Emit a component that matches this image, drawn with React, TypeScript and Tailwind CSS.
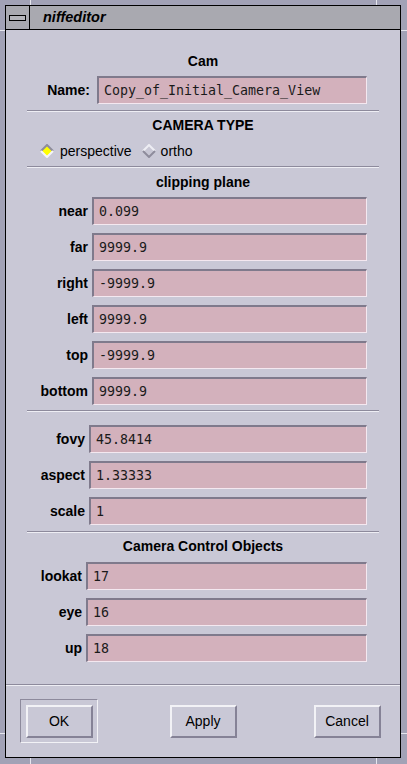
import React from 'react';

const sans = { fontFamily: '"Liberation Sans", Arial, sans-serif' };
const mono = { fontFamily: '"DejaVu Sans Mono", "Liberation Mono", monospace' };

function Field({ value, width }: { value: string; width: string }) {
  return (
    <div
      className={`h-[28px] ${width} bg-[#d3b1bc] border-t-2 border-l-2 border-b border-r border-t-[#7f7a8c] border-l-[#7f7a8c] border-b-[#f4e8f0] border-r-[#f4e8f0] flex items-center pl-[5px] text-[13.3px] text-[#1a1a1a]`}
      style={mono}
    >
      {value}
    </div>
  );
}

function Row({ label, value, width, gap = 'ml-[4px]' }: { label: string; value: string; width: string; gap?: string }) {
  return (
    <div className="flex items-center justify-end pr-[33px]">
      <span className="text-[14px] font-bold text-black leading-none" style={sans}>
        {label}
      </span>
      <div className={gap}>
        <Field value={value} width={width} />
      </div>
    </div>
  );
}

function Sep({ full = false }: { full?: boolean }) {
  return (
    <div className={full ? 'w-full' : 'mx-[21px]'}>
      <div className="h-px bg-[#8d8a9c]" />
      <div className="h-px bg-[#eeeef4]" />
    </div>
  );
}

function Heading({ children }: { children: React.ReactNode }) {
  return (
    <div className="h-[16px] flex items-center justify-center text-[14px] font-bold text-black" style={sans}>
      {children}
    </div>
  );
}

function Diamond({ on }: { on: boolean }) {
  return (
    <svg width="14" height="14" viewBox="0 0 14 14">
      <polygon points="7,1 13,7 7,13 1,7" fill={on ? '#ffff00' : '#c8c7d5'} />
      <polyline points="1,7 7,1 13,7" fill="none" stroke={on ? '#8e8c9c' : '#eeeef4'} strokeWidth="2" />
      <polyline points="13,7 7,13 1,7" fill="none" stroke={on ? '#f4f4f8' : '#8e8c9c'} strokeWidth="2" />
    </svg>
  );
}

function Button({ label, isDefault = false }: { label: string; isDefault?: boolean }) {
  return (
    <div
      className={`w-[78px] h-[44px] flex items-center justify-center ${
        isDefault ? 'border-t border-l border-b border-r border-t-[#8d8a9c] border-l-[#8d8a9c] border-b-[#f2f2f6] border-r-[#f2f2f6]' : ''
      }`}
    >
      <div
        className="w-[67px] h-[33px] bg-[#c9c8d6] border-t-2 border-l-2 border-b-2 border-r-2 border-t-[#f2f2f6] border-l-[#f2f2f6] border-b-[#858296] border-r-[#858296] flex items-center justify-center text-[14px] text-black"
        style={sans}
      >
        {label}
      </div>
    </div>
  );
}

export default function App() {
  return (
    <div className="relative w-[407px] h-[764px] bg-[#a2a2b6] pt-[5px] pl-[5px] pr-[6px] pb-[6px]">
      {/* frame corner ticks */}
      <div className="absolute left-[30px] top-0 w-px h-[5px] bg-[#e6e6ee]" />
      <div className="absolute left-[376px] top-0 w-px h-[5px] bg-[#e6e6ee]" />
      <div className="absolute left-[30px] bottom-0 w-px h-[6px] bg-[#e6e6ee]" />
      <div className="absolute left-[376px] bottom-0 w-px h-[6px] bg-[#e6e6ee]" />
      <div className="absolute left-0 top-[30px] w-[5px] h-px bg-[#e6e6ee]" />
      <div className="absolute right-0 top-[30px] w-[6px] h-px bg-[#e6e6ee]" />
      <div className="absolute left-0 top-[733px] w-[5px] h-px bg-[#e6e6ee]" />
      <div className="absolute right-0 top-[733px] w-[6px] h-px bg-[#e6e6ee]" />

      <div className="w-full h-full border border-black flex flex-col bg-[#c9c8d6]">
        {/* title bar */}
        <div className="h-[24px] flex border-b border-black bg-[#a9a9b0]">
          <div className="w-[24px] h-full border-r border-black flex items-center justify-center">
            <div className="w-[17px] h-[6px] border border-black bg-[#b4b4ba] mt-[1px]" />
          </div>
          <div
            className="flex items-center pl-[13px] text-[14.5px] font-bold italic text-black"
            style={sans}
          >
            niffeditor
          </div>
        </div>

        {/* content */}
        <div className="flex-1 flex flex-col">
          <div className="mt-[23px]">
            <Heading>Cam</Heading>
          </div>
          <div className="mt-[7px]">
            <Row label="Name:" value="Copy_of_Initial_Camera_View" width="w-[270px]" gap="ml-[7px]" />
          </div>
          <div className="mt-[6px]">
            <Sep />
          </div>
          <div className="mt-[5px]">
            <Heading>CAMERA TYPE</Heading>
          </div>
          <div className="mt-[10px] h-[16px] flex items-center pl-[34px] text-[14px] text-black" style={sans}>
            <Diamond on />
            <span className="ml-[6px]">perspective</span>
            <span className="ml-[10px] flex">
              <Diamond on={false} />
            </span>
            <span className="ml-[5px]">ortho</span>
          </div>
          <div className="mt-[7px]">
            <Sep />
          </div>
          <div className="mt-[6px]">
            <Heading>clipping plane</Heading>
          </div>
          <div className="mt-[7px] flex flex-col gap-[8px]">
            <Row label="near" value="0.099" width="w-[275px]" />
            <Row label="far" value="9999.9" width="w-[275px]" />
            <Row label="right" value="-9999.9" width="w-[275px]" />
            <Row label="left" value="9999.9" width="w-[275px]" />
            <Row label="top" value="-9999.9" width="w-[275px]" />
            <Row label="bottom" value="9999.9" width="w-[275px]" />
          </div>
          <div className="mt-[5px]">
            <Sep />
          </div>
          <div className="mt-[13px] flex flex-col gap-[8px]">
            <Row label="fovy" value="45.8414" width="w-[278px]" />
            <Row label="aspect" value="1.33333" width="w-[278px]" />
            <Row label="scale" value="1" width="w-[278px]" />
          </div>
          <div className="mt-[6px]">
            <Sep />
          </div>
          <div className="mt-[5px]">
            <Heading>Camera Control Objects</Heading>
          </div>
          <div className="mt-[8px] flex flex-col gap-[8px]">
            <Row label="lookat" value="17" width="w-[281px]" />
            <Row label="eye" value="16" width="w-[281px]" />
            <Row label="up" value="18" width="w-[281px]" />
          </div>
          <div className="mt-[22px]">
            <Sep full />
          </div>
          <div className="mt-[13px] flex justify-between px-[14px]">
            <Button label="OK" isDefault />
            <Button label="Apply" />
            <Button label="Cancel" />
          </div>
        </div>
      </div>
    </div>
  );
}
